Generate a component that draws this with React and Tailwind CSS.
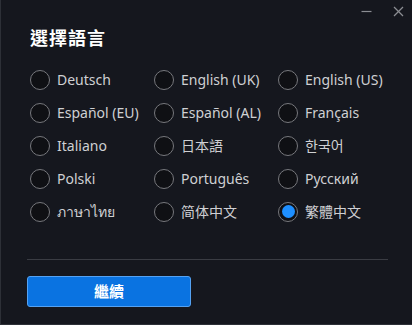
import { useState } from "react";

const LANGS = [
  "Deutsch", "English (UK)", "English (US)",
  "Español (EU)", "Español (AL)", "Français",
  "Italiano", "日本語", "한국어",
  "Polski", "Português", "Русский",
  "ภาษาไทย", "简体中文", "繁體中文",
];

function Radio({ checked }) {
  return (
    <span className="w-5 h-5 rounded-full border-[1.5px] border-[#77787d] bg-[#0f1014] flex items-center justify-center shrink-0">
      {checked && <span className="w-[13px] h-[13px] rounded-full bg-[#1e8fff]" />}
    </span>
  );
}

export default function App() {
  const [lang, setLang] = useState("繁體中文");

  return (
    <div
      className="w-[412px] h-[325px] bg-[#15171e] border-l border-b border-[#2d3037] flex flex-col relative overflow-hidden"
      style={{ fontFamily: '"Noto Sans", "Noto Sans CJK TC", "Noto Sans CJK JP", "Noto Sans CJK KR", sans-serif' }}
    >
      <div className="absolute top-[6px] right-[8px] flex items-center gap-[21px]">
        <svg width="11" height="11" viewBox="0 0 11 11">
          <line x1="0.5" y1="5.5" x2="10.5" y2="5.5" stroke="#8b8d93" strokeWidth="1.2" />
        </svg>
        <svg width="11" height="11" viewBox="0 0 11 11">
          <line x1="1" y1="1" x2="10" y2="10" stroke="#8b8d93" strokeWidth="1.2" />
          <line x1="10" y1="1" x2="1" y2="10" stroke="#8b8d93" strokeWidth="1.2" />
        </svg>
      </div>

      <h1
        className="mt-[25px] ml-[29px] text-[18px] leading-[24px] font-bold text-white tracking-[1px]"
        style={{ fontFamily: '"Noto Sans CJK TC", sans-serif' }}
      >
        選擇語言
      </h1>

      <div className="mt-[14px] ml-[29px] grid grid-cols-[124px_124px_124px] auto-rows-[33px]">
        {LANGS.map((l) => (
          <button
            key={l}
            onClick={() => setLang(l)}
            className="flex items-center gap-[7px] text-[14px] text-[#cfd0d3] text-left cursor-pointer"
          >
            <Radio checked={lang === l} />
            <span className="whitespace-nowrap">{l}</span>
          </button>
        ))}
      </div>

      <hr className="mt-[31px] ml-[26px] mr-[24px] border-t border-[#3a3c43]" />

      <button
        className="mt-[16px] ml-[26px] w-[164px] h-[31px] rounded-[3px] bg-[#0a73e1] border-[1.5px] border-[#55a2f2] text-white text-[15px] font-bold flex items-center justify-center"
        style={{ fontFamily: '"Noto Sans CJK TC", sans-serif' }}
      >
        繼續
      </button>
    </div>
  );
}
